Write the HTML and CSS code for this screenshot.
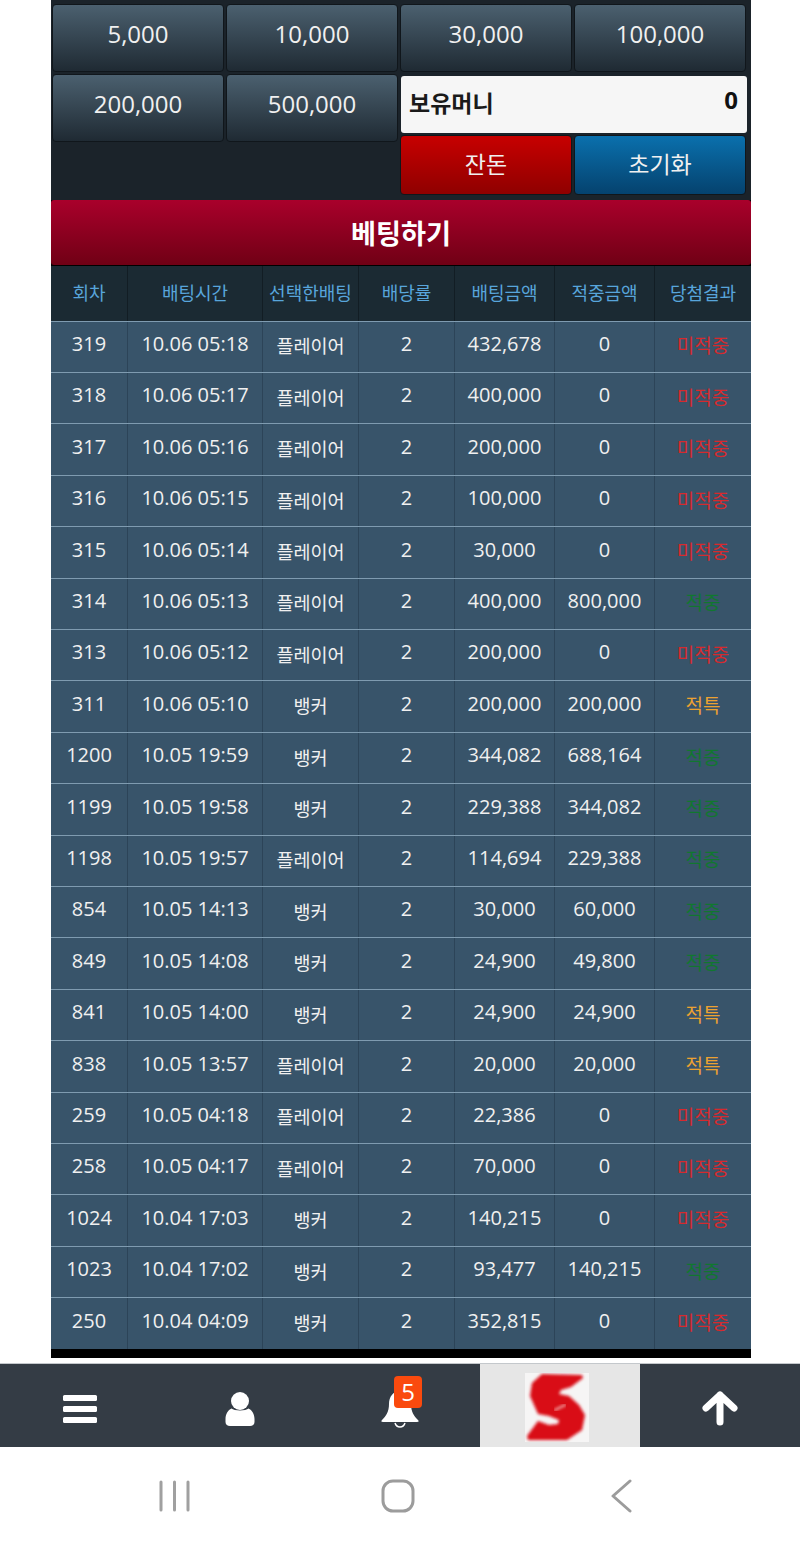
FILE: index.html
```
<!DOCTYPE html>
<html lang="ko">
<head>
<meta charset="utf-8">
<title>베팅</title>
<link rel="stylesheet" href="styles.css">
</head>
<body>
<main class="wrap">
  <section class="panel">
    <div class="chips">
      <button class="btn chip">5,000</button>
      <button class="btn chip">10,000</button>
      <button class="btn chip">30,000</button>
      <button class="btn chip">100,000</button>
    </div>
    <div class="panel-lower">
      <div class="chips-half">
        <button class="btn chip">200,000</button>
        <button class="btn chip">500,000</button>
      </div>
      <div class="money-side">
        <div class="money"><span class="money-label">보유머니</span><span class="money-value">0</span></div>
        <div class="actions">
          <button class="btn action red">잔돈</button>
          <button class="btn action blue">초기화</button>
        </div>
      </div>
    </div>
  </section>
  <button class="bet">베팅하기</button>
  <section class="table">
    <div class="row head"><div>회차</div><div>배팅시간</div><div>선택한배팅</div><div>배당률</div><div>배팅금액</div><div>적중금액</div><div>당첨결과</div></div>
    <div class="row"><div>319</div><div>10.06 05:18</div><div class="ko">플레이어</div><div>2</div><div>432,678</div><div>0</div><div class="ko lose">미적중</div></div>
    <div class="row"><div>318</div><div>10.06 05:17</div><div class="ko">플레이어</div><div>2</div><div>400,000</div><div>0</div><div class="ko lose">미적중</div></div>
    <div class="row"><div>317</div><div>10.06 05:16</div><div class="ko">플레이어</div><div>2</div><div>200,000</div><div>0</div><div class="ko lose">미적중</div></div>
    <div class="row"><div>316</div><div>10.06 05:15</div><div class="ko">플레이어</div><div>2</div><div>100,000</div><div>0</div><div class="ko lose">미적중</div></div>
    <div class="row"><div>315</div><div>10.06 05:14</div><div class="ko">플레이어</div><div>2</div><div>30,000</div><div>0</div><div class="ko lose">미적중</div></div>
    <div class="row"><div>314</div><div>10.06 05:13</div><div class="ko">플레이어</div><div>2</div><div>400,000</div><div>800,000</div><div class="ko win">적중</div></div>
    <div class="row"><div>313</div><div>10.06 05:12</div><div class="ko">플레이어</div><div>2</div><div>200,000</div><div>0</div><div class="ko lose">미적중</div></div>
    <div class="row"><div>311</div><div>10.06 05:10</div><div class="ko">뱅커</div><div>2</div><div>200,000</div><div>200,000</div><div class="ko tie">적특</div></div>
    <div class="row"><div>1200</div><div>10.05 19:59</div><div class="ko">뱅커</div><div>2</div><div>344,082</div><div>688,164</div><div class="ko win">적중</div></div>
    <div class="row"><div>1199</div><div>10.05 19:58</div><div class="ko">뱅커</div><div>2</div><div>229,388</div><div>344,082</div><div class="ko win">적중</div></div>
    <div class="row"><div>1198</div><div>10.05 19:57</div><div class="ko">플레이어</div><div>2</div><div>114,694</div><div>229,388</div><div class="ko win">적중</div></div>
    <div class="row"><div>854</div><div>10.05 14:13</div><div class="ko">뱅커</div><div>2</div><div>30,000</div><div>60,000</div><div class="ko win">적중</div></div>
    <div class="row"><div>849</div><div>10.05 14:08</div><div class="ko">뱅커</div><div>2</div><div>24,900</div><div>49,800</div><div class="ko win">적중</div></div>
    <div class="row"><div>841</div><div>10.05 14:00</div><div class="ko">뱅커</div><div>2</div><div>24,900</div><div>24,900</div><div class="ko tie">적특</div></div>
    <div class="row"><div>838</div><div>10.05 13:57</div><div class="ko">플레이어</div><div>2</div><div>20,000</div><div>20,000</div><div class="ko tie">적특</div></div>
    <div class="row"><div>259</div><div>10.05 04:18</div><div class="ko">플레이어</div><div>2</div><div>22,386</div><div>0</div><div class="ko lose">미적중</div></div>
    <div class="row"><div>258</div><div>10.05 04:17</div><div class="ko">플레이어</div><div>2</div><div>70,000</div><div>0</div><div class="ko lose">미적중</div></div>
    <div class="row"><div>1024</div><div>10.04 17:03</div><div class="ko">뱅커</div><div>2</div><div>140,215</div><div>0</div><div class="ko lose">미적중</div></div>
    <div class="row"><div>1023</div><div>10.04 17:02</div><div class="ko">뱅커</div><div>2</div><div>93,477</div><div>140,215</div><div class="ko win">적중</div></div>
    <div class="row"><div>250</div><div>10.04 04:09</div><div class="ko">뱅커</div><div>2</div><div>352,815</div><div>0</div><div class="ko lose">미적중</div></div>
  </section>
</main>
<nav class="nav">
  <div class="nav-item">
    <svg width="36" height="32" viewBox="0 0 36 32"><g fill="#fff"><rect x="1" y="2" width="34" height="6" rx="1.5"/><rect x="1" y="13" width="34" height="6" rx="1.5"/><rect x="1" y="24" width="34" height="6" rx="1.5"/></g></svg>
  </div>
  <div class="nav-item">
    <svg width="30" height="36" viewBox="0 0 30 36"><g fill="#fff"><circle cx="15" cy="10" r="9"/><path d="M6.500 17.500C9 20 21 20 23.500 17.500C27 19 29.500 23 29.500 28V31C29.500 33.500 27.500 35 25 35H5C2.500 35 .5 33.500 .5 31V28C.5 23 3 19 6.500 17.500Z"/></g></svg>
  </div>
  <div class="nav-item">
    <svg class="bell" width="40" height="38" viewBox="0 0 40 38"><path fill="#fff" d="M20 1C13 1 9 7 9 14C9 22 6 26 2 30C1 31 1 32 3 32H37C39 32 39 31 38 30C34 26 31 22 31 14C31 7 27 1 20 1Z"/><path fill="none" stroke="#fff" stroke-width="1.500" d="M15 33C16 36 18 37 20 37C22 37 24 36 25 33"/></svg>
    <span class="badge">5</span>
  </div>
  <div class="nav-item logo">
    <svg width="64" height="69" viewBox="0 0 64 69"><defs><filter id="soft" x="-10%" y="-10%" width="120%" height="120%"><feGaussianBlur stdDeviation="1.500"/></filter></defs><rect width="64" height="69" fill="#f6f5f5"/><path filter="url(#soft)" fill="#d90d12" d="M17 1L57 2L58 5L46 14L36 17L34 21L44 23L54 32L60 42L57 57L42 67L3 67L2 63L13 48L24 52L33 51L34 47L24 43L13 41L5 23L7 10Z"/><path filter="url(#soft)" fill="none" stroke="#f0a0a0" stroke-width="2.500" stroke-linecap="round" d="M30 37L40 32"/></svg>
  </div>
  <div class="nav-item">
    <svg width="36" height="36" viewBox="0 0 36 36"><path fill="none" stroke="#fff" stroke-width="7" stroke-linecap="round" stroke-linejoin="round" d="M18 31V4M4 17L18 4L32 17"/></svg>
  </div>
</nav>
<footer class="sys">
  <div class="sys-item"><svg width="32" height="32" viewBox="0 0 32 32"><path fill="none" stroke="#a0a0a0" stroke-width="3" stroke-linecap="round" d="M3 2V30M16.500 2V30M30 2V30"/></svg></div>
  <div class="sys-item"><svg width="34" height="34" viewBox="0 0 34 34"><rect x="2" y="2" width="30" height="30" rx="10" fill="none" stroke="#9c9c9c" stroke-width="3"/></svg></div>
  <div class="sys-item"><svg width="24" height="34" viewBox="0 0 24 34"><path fill="none" stroke="#9c9c9c" stroke-width="3" stroke-linecap="round" stroke-linejoin="round" d="M20 2L3 17L20 32"/></svg></div>
</footer>
</body>
</html>
```
FILE: styles.css
```
* { box-sizing: border-box; }
html, body { margin: 0; padding: 0; background: #fff; }
body {
  width: 800px;
  height: 1547px;
  overflow: hidden;
  font-family: "Open Sans", "Noto Sans CJK KR", sans-serif;
}
button { font-family: inherit; margin: 0; cursor: pointer; }

.wrap { width: 700px; margin-left: 51px; background: #000; height: 1358px; }

.panel { background: #1b232a; height: 200px; padding: 4px 4px 0 1px; }
.chips { display: grid; grid-template-columns: repeat(4, 172px); gap: 2px; }
.panel-lower { display: flex; gap: 2px; margin-top: 2px; }
.chips-half { display: grid; grid-template-columns: repeat(2, 172px); gap: 2px; align-self: flex-start; }
.money-side { width: 347px; padding-top: 2px; }

.btn {
  border: 1px solid #10161b;
  border-radius: 4px;
  color: #f0f0f0;
  padding: 0;
}
.chip {
  height: 68px;
  font-size: 24px;
  padding-bottom: 9px;
  background: linear-gradient(#4b606f, #1f2a33);
}
.money {
  display: flex;
  justify-content: space-between;
  align-items: center;
  height: 57px;
  margin-left: 1px;
  padding: 0 9px 5px 8px;
  background: #f6f6f6;
  border-radius: 3px;
  color: #1a1a1a;
  font-weight: 700;
  font-size: 23px;
}
.money-value { font-size: 24px; color: #111; margin-top: -5px; }
.actions { display: flex; gap: 2px; margin-top: 2px; }
.action { width: 172px; height: 60px; font-size: 23px; padding-bottom: 4px; }
.red { background: linear-gradient(#c70000, #8f0000); }
.blue { background: linear-gradient(#0a70ad, #05426e); }

.bet {
  display: block;
  width: 700px;
  height: 65px;
  border: 0;
  border-radius: 3px;
  background: linear-gradient(#a9002b, #700015);
  color: #fff;
  font-size: 27.2px;
  font-weight: 700;
  padding: 0 0 2px;
}

.table { margin-top: 1px; }
.row {
  display: grid;
  grid-template-columns: 77px 135px 96px 96px 100px 100px 96px;
  height: 51.42px;
  background: #38546a;
  border-top: 1px solid #7f9bb0;
  color: #f0f0f0;
  font-size: 20px;
  text-align: center;
}
.row > div {
  border-right: 1px solid #2c4458;
  padding-top: 5.4px;
  line-height: 34px;
}
.row > div:last-child { border-right: 0; }
.row .ko { font-size: 18.5px; padding-top: 7.900px; }
.row .lose, .row .win, .row .tie { font-size: 19px; }
.lose { color: #d62a2e; }
.win { color: #11772f; }
.tie { color: #eca231; }

.row.head {
  height: 54.5px;
  background: #1b2a33;
  border-top: 0;
  color: #58a5db;
  font-size: 18px;
}
.row.head > div { border-right-color: #121d24; padding-top: 10px; }

.nav {
  display: flex;
  height: 84px;
  margin-top: 5px;
  background: #343c45;
  border-top: 1px solid #c4c8cc;
}
.nav-item {
  position: relative;
  width: 160px;
  display: flex;
  align-items: center;
  justify-content: center;
  padding-top: 6px;
}
.nav-item .bell { margin-top: 1px; }
.nav-item.logo { background: #e6e6e6; padding: 3px 6px 0 0; }
.badge {
  position: absolute;
  left: 74px;
  top: 12px;
  width: 28px;
  height: 32px;
  background: #fa4a0e;
  border-radius: 4px;
  color: #fff;
  font-size: 24px;
  line-height: 32px;
  text-align: center;
}

.sys { display: flex; justify-content: center; height: 100px; padding: 0 4px 3px 0; background: #fff; }
.sys-item { width: 224px; display: flex; align-items: center; justify-content: center; }
```
